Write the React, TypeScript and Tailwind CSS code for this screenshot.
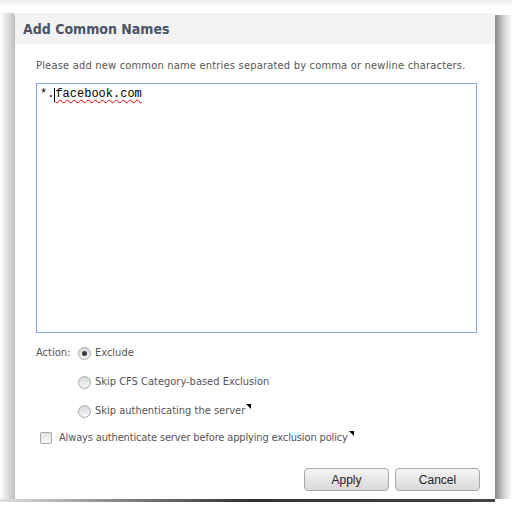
import React from 'react'

const Radio = ({ checked }: { checked?: boolean }) => (
  <span className="flex items-center justify-center w-[13px] h-[13px] rounded-full border border-[#a9a9a9] bg-gradient-to-b from-[#d8d8d8] to-[#f7f7f7]">
    {checked && <span className="w-[5px] h-[5px] rounded-full bg-[#3a3a3a]" />}
  </span>
)

const Marker = () => (
  <svg width="5" height="5" viewBox="0 0 5 5" className="inline-block align-top ml-[1px]">
    <polygon points="0,0 5,0 5,5" fill="#000" />
  </svg>
)

const Button = ({ label }: { label: string }) => (
  <button className="w-[85px] h-[23px] rounded-[4px] border border-[#a8a8a8] bg-gradient-to-b from-[#f5f5f5] to-[#d8d8d8] text-[12px] text-[#222] font-['Liberation_Sans',Arial,sans-serif]">
    {label}
  </button>
)

const App = () => (
  <div className="w-[512px] h-[516px] bg-white flex flex-col font-['DejaVu_Sans_Condensed','DejaVu_Sans',Tahoma,sans-serif]">
    <div className="h-[13px] shrink-0 bg-gradient-to-b from-[#eeeeee] via-white to-white" />
    <div className="flex h-[486px] shrink-0">
      <div className="w-[14px] bg-gradient-to-r from-white to-[#c4c4c4]" />
      <div className="w-[481px] flex flex-col bg-white border-l border-[#bdbdbd] rounded-tl-[4px] rounded-tr-[4px]">
        <div className="h-[31px] shrink-0 bg-[#f3f3f3] flex items-center pl-[8px] pt-[2px] rounded-tr-[4px]">
          <span className="text-[14px] font-bold text-[#4a5466]">Add Common Names</span>
        </div>
        <div className="flex flex-col px-[21px] pt-[15px]">
          <p className="text-[11px] text-[#555] leading-[14px] whitespace-nowrap tracking-[0.2px]">
            Please add new common name entries separated by comma or newline characters.
          </p>
          <div className="mt-[10px] w-[441px] h-[250px] border border-[#86a8de] px-[3px] pt-[3px]">
            <div className="flex items-center text-[12px] leading-[15px] text-black font-['Liberation_Mono',monospace]">
              <span>*.</span>
              <span className="w-[1px] h-[14px] bg-black" />
              <span className="underline decoration-wavy decoration-[#e00] decoration-[1px] underline-offset-[2px]">facebook.com</span>
            </div>
          </div>
          <div className="flex mt-[13px] text-[11px] text-[#555] leading-[14px]">
            <span className="w-[42px]">Action:</span>
            <div className="flex flex-col gap-[15px]">
              <label className="flex items-center gap-[4px]">
                <Radio checked />
                <span>Exclude</span>
              </label>
              <label className="flex items-center gap-[4px]">
                <Radio />
                <span>Skip CFS Category-based Exclusion</span>
              </label>
              <label className="flex items-center gap-[4px]">
                <Radio />
                <span>
                  Skip authenticating the server
                  <Marker />
                </span>
              </label>
            </div>
          </div>
          <label className="flex items-center mt-[13px] ml-[4px] gap-[7px] text-[11px] text-[#555] leading-[14px]">
            <span className="w-[12px] h-[12px] rounded-[2px] border border-[#a9a9a9] bg-gradient-to-b from-[#e2e2e2] to-[#f8f8f8]" />
            <span className="tracking-[-0.15px]">
              Always authenticate server before applying exclusion policy
              <Marker />
            </span>
          </label>
          <div className="flex justify-end gap-[6px] mt-[23px] mr-[-6px]">
            <Button label="Apply" />
            <Button label="Cancel" />
          </div>
        </div>
      </div>
      <div className="w-[17px] mt-[2px] bg-gradient-to-r from-[#8a8a8a] via-[#d0d0d0] to-white" />
    </div>
    <div className="h-[3px] w-[495px] shrink-0 bg-gradient-to-r from-[#e0e0e0] via-[#333] to-[#444]" />
  </div>
)

export default App
